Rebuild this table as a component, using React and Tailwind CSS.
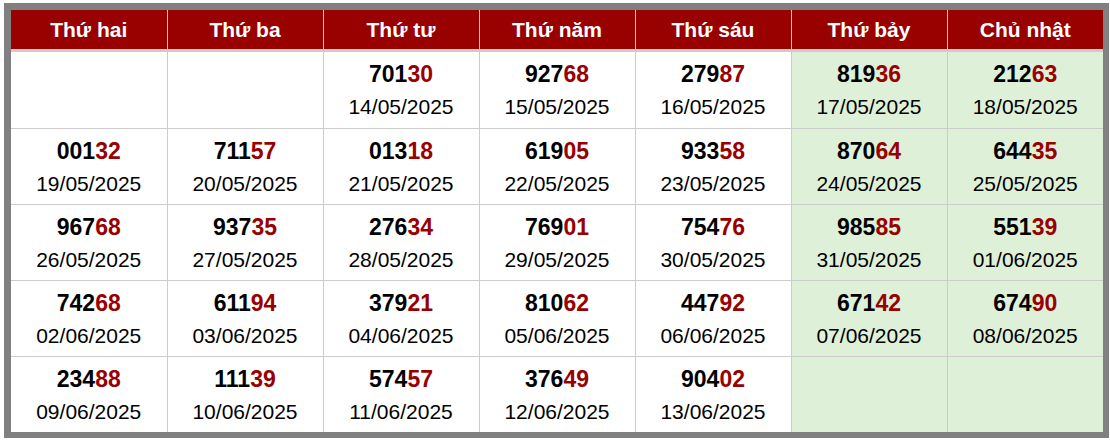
import React from "react";

const days = ["Thứ hai", "Thứ ba", "Thứ tư", "Thứ năm", "Thứ sáu", "Thứ bảy", "Chủ nhật"];

// each week: 7 cells, null = empty
const weeks = [
  [null, null, ["70130", "14/05/2025"], ["92768", "15/05/2025"], ["27987", "16/05/2025"], ["81936", "17/05/2025"], ["21263", "18/05/2025"]],
  [["00132", "19/05/2025"], ["71157", "20/05/2025"], ["01318", "21/05/2025"], ["61905", "22/05/2025"], ["93358", "23/05/2025"], ["87064", "24/05/2025"], ["64435", "25/05/2025"]],
  [["96768", "26/05/2025"], ["93735", "27/05/2025"], ["27634", "28/05/2025"], ["76901", "29/05/2025"], ["75476", "30/05/2025"], ["98585", "31/05/2025"], ["55139", "01/06/2025"]],
  [["74268", "02/06/2025"], ["61194", "03/06/2025"], ["37921", "04/06/2025"], ["81062", "05/06/2025"], ["44792", "06/06/2025"], ["67142", "07/06/2025"], ["67490", "08/06/2025"]],
  [["23488", "09/06/2025"], ["11139", "10/06/2025"], ["57457", "11/06/2025"], ["37649", "12/06/2025"], ["90402", "13/06/2025"], null, null],
];

export default function App() {
  return (
    <div className="bg-white pl-[4px] pt-[3px] font-['Liberation_Sans',Arial,sans-serif]">
      <div className="w-[1105px] border-[#808080] border-l-[7px] border-t-[7px] border-r-[6px] border-b-[6px] bg-white">
        <table className="w-[1092px] table-fixed border-collapse">
          <thead>
            <tr className="h-[40px] bg-[#990000]">
              {days.map((d, i) => (
                <th
                  key={d}
                  className={`w-[156px] p-0 text-center text-[21px] font-bold text-white ${i > 0 ? "border-l border-[#cccccc]" : ""}`}
                >
                  {d}
                </th>
              ))}
            </tr>
          </thead>
          <tbody className="border-t-[3px] border-[#cccccc]">
            {weeks.map((week, wi) => (
              <tr key={wi} className={`${wi === 0 ? "h-[78px]" : "h-[76px] border-t border-[#cccccc]"}`}>
                {week.map((cell, ci) => (
                  <td
                    key={ci}
                    className={`p-0 text-center align-middle ${ci > 0 ? "border-l border-[#cccccc]" : ""} ${ci >= 5 ? "bg-[#dff0d8]" : "bg-white"}`}
                  >
                    {cell && (
                      <div className="flex flex-col items-center pt-[2px]">
                        <div className="text-[23px] font-bold leading-[32px] text-black">
                          {cell[0].slice(0, 3)}
                          <span className="text-[#990000]">{cell[0].slice(3)}</span>
                        </div>
                        <div className="mt-[1px] text-[21px] leading-[32px] text-black">{cell[1]}</div>
                      </div>
                    )}
                  </td>
                ))}
              </tr>
            ))}
          </tbody>
        </table>
      </div>
    </div>
  );
}
